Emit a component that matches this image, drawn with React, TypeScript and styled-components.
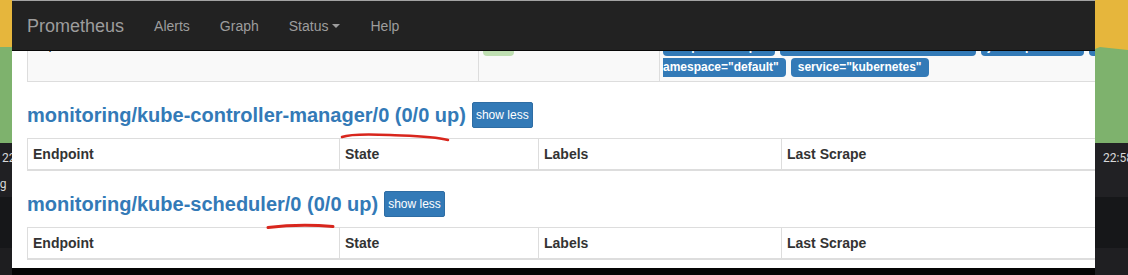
import React from "react";
import styled, { createGlobalStyle } from "styled-components";

const Global = createGlobalStyle`
  html, body { margin: 0; padding: 0; background: #000; }
  body { font-family: "Liberation Sans", Arial, sans-serif; }
  * { box-sizing: border-box; }
`;

const Screen = styled.div`
  position: relative;
  width: 1128px;
  height: 275px;
  overflow: hidden;
  display: flex;
  background: #000;
`;

/* ---------- Grafana background strips ---------- */
const Strip = styled.div<{ $w: number }>`
  width: ${(p) => p.$w}px;
  flex: none;
  display: flex;
  flex-direction: column;
  overflow: hidden;
`;

const Chart = styled.svg`
  display: block;
  flex: none;
`;

const PanelBlock = styled.div<{ $h?: number; $bg: string; $pad?: number }>`
  flex: ${(p) => (p.$h ? `0 0 ${p.$h}px` : "1")};
  background: ${(p) => p.$bg};
  padding-left: ${(p) => p.$pad ?? 0}px;
  display: flex;
  flex-direction: column;
  white-space: nowrap;
`;

const TickText = styled.span<{ $top: number; $shift?: number }>`
  margin-top: ${(p) => p.$top}px;
  margin-left: ${(p) => p.$shift ?? 0}px;
  font-family: Roboto, "Liberation Sans", sans-serif;
  font-size: 12px;
  line-height: 14px;
  color: #d8d9da;
`;

/* ---------- Browser window ---------- */
const WindowColumn = styled.div`
  flex: 1;
  display: flex;
  flex-direction: column;
  min-width: 0;
`;

const BrowserWindow = styled.div`
  flex: 0 0 268px;
  display: grid;
  grid-template-rows: 1px 50px 1fr;
  background: #fff;
  overflow: hidden;
`;

const TopEdge = styled.div`
  background: #a3a3a3;
`;

const Navbar = styled.nav`
  background: #222;
  border-bottom: 1px solid #080808;
  display: flex;
  align-items: center;
`;

const Brand = styled.span`
  padding: 0 15px;
  font-size: 18px;
  line-height: 20px;
  color: #9d9d9d;
`;

const NavLink = styled.span`
  padding: 0 15px;
  font-size: 14px;
  line-height: 20px;
  color: #9d9d9d;
  display: flex;
  align-items: center;
`;

const Caret = styled.span`
  display: inline-block;
  width: 0;
  height: 0;
  margin-left: 4px;
  border-top: 4px solid #9d9d9d;
  border-left: 4px solid transparent;
  border-right: 4px solid transparent;
`;

const Content = styled.div`
  min-height: 0;
  overflow: hidden;
  padding-left: 15px;
  color: #333;
`;

/* bottom of a row of the previous (kubernetes) table, scrolled under the navbar */
const PrevRow = styled.div`
  display: grid;
  grid-template-columns: 450px 181px 1fr;
  grid-template-rows: 30px;
  background: #f9f9f9;
  border-left: 1px solid #ddd;
  border-bottom: 1px solid #ddd;
`;

const Cell = styled.div<{ $divider?: boolean; $padLeft?: number }>`
  display: flex;
  flex-direction: column;
  align-items: flex-start;
  height: 30px;
  padding: 0 5px 4px ${(p) => p.$padLeft ?? 5}px;
  border-left: ${(p) => (p.$divider ? "1px solid #ddd" : "none")};
  font-size: 14px;
  line-height: 20px;
  white-space: nowrap;
  overflow: hidden;
`;

/* the part of a cell that is scrolled away under the navbar */
const Scrolled = styled.div<{ $hidden: number }>`
  flex: none;
  margin-top: -${(p) => p.$hidden}px;
`;

const CellText = styled.div`
  height: 20px;
`;

const LabelLine = styled.div`
  display: flex;
  gap: 5px;
  & + & {
    margin-top: 2px;
  }
`;

const Label = styled.span<{
  $tone?: "primary" | "success";
  $cont?: boolean;
  $cut?: boolean;
}>`
  display: inline-block;
  flex: none;
  height: 19px;
  padding: 3px ${(p) => (p.$cut ? 0 : 7)}px 3px ${(p) => (p.$cont ? 0 : 7)}px;
  font-size: 12px;
  font-weight: bold;
  line-height: 13px;
  color: #fff;
  background: ${(p) => (p.$tone === "success" ? "#bfdfb2" : "#337ab7")};
  border-radius: ${(p) => (p.$cont ? "0 4px 4px 0" : p.$cut ? "4px 0 0 4px" : "4px")};
  white-space: nowrap;
`;

/* target sections */
const Heading = styled.h2`
  display: flex;
  align-items: center;
  gap: 6px;
  margin: 20px 0 10px;
  height: 26px;
`;

const JobLink = styled.a`
  font-size: 20px;
  font-weight: bold;
  line-height: 26px;
  color: #337ab7;
  text-decoration: none;
  white-space: nowrap;
`;

const ToggleButton = styled.button`
  height: 26px;
  padding: 0 3px;
  font-family: "Liberation Sans", Arial, sans-serif;
  font-size: 12px;
  color: #fff;
  background: #337ab7;
  border: 1px solid #2e6da4;
  border-radius: 2px;
`;

const TargetTable = styled.div`
  display: grid;
  grid-template-columns: 311px 199px 243px 1fr;
  border-top: 1px solid #ddd;
  border-left: 1px solid #ddd;
  border-bottom: 2px solid #ddd;
  margin-bottom: 20px;
`;

const HeadCell = styled.div<{ $divider?: boolean }>`
  padding: 5px;
  border-left: ${(p) => (p.$divider ? "1px solid #ddd" : "none")};
  font-size: 14px;
  font-weight: bold;
  line-height: 20px;
  color: #333;
`;

const BottomShade = styled.div`
  flex: 1;
  background: #050505;
`;

const Annotation = styled.svg`
  position: absolute;
  left: 0;
  top: 0;
  pointer-events: none;
`;

const columns = ["Endpoint", "State", "Labels", "Last Scrape"];

function TargetSection({ job }: { job: string }) {
  return (
    <section>
      <Heading>
        <JobLink href="#">{job} (0/0 up)</JobLink>
        <ToggleButton>show less</ToggleButton>
      </Heading>
      <TargetTable>
        {columns.map((c, i) => (
          <HeadCell key={c} $divider={i > 0}>
            {c}
          </HeadCell>
        ))}
      </TargetTable>
    </section>
  );
}

export default function App() {
  return (
    <>
      <Global />
      <Screen>
        <Strip $w={12}>
          <Chart width={12} height={143}>
            <rect x={0} y={0} width={12} height={47} fill="#e6b63c" />
            <rect x={0} y={47} width={12} height={96} fill="#7eb26d" />
          </Chart>
          <PanelBlock $h={54} $bg="#202023" $pad={2}>
            <TickText $top={8}>22:58</TickText>
            <TickText $top={12} $shift={-9}>
              ng
            </TickText>
          </PanelBlock>
          <PanelBlock $h={51} $bg="#161719" />
          <PanelBlock $bg="#1e1e20" />
        </Strip>

        <WindowColumn>
          <BrowserWindow>
            <TopEdge />
            <Navbar>
              <Brand>Prometheus</Brand>
              <NavLink>Alerts</NavLink>
              <NavLink>Graph</NavLink>
              <NavLink>
                Status <Caret />
              </NavLink>
              <NavLink>Help</NavLink>
            </Navbar>
            <Content>
              <PrevRow>
                <Cell>
                  <Scrolled $hidden={17}>
                    <CellText>https://192.168.10.100:6443/metrics</CellText>
                  </Scrolled>
                </Cell>
                <Cell $divider $padLeft={4}>
                  <Scrolled $hidden={16}>
                    <Label $tone="success">UP</Label>
                  </Scrolled>
                </Cell>
                <Cell $divider $padLeft={3}>
                  <Scrolled $hidden={14}>
                    <LabelLine>
                      <Label>endpoint="https"</Label>
                      <Label>instance="192.168.10.100:6443"</Label>
                      <Label>job="apiserver"</Label>
                      <Label $cut>n</Label>
                    </LabelLine>
                    <LabelLine>
                      <Label $cont>amespace="default"</Label>
                      <Label>service="kubernetes"</Label>
                    </LabelLine>
                  </Scrolled>
                </Cell>
              </PrevRow>
              <TargetSection job="monitoring/kube-controller-manager/0" />
              <TargetSection job="monitoring/kube-scheduler/0" />
            </Content>
          </BrowserWindow>
          <BottomShade />
        </WindowColumn>

        <Strip $w={33}>
          <Chart width={33} height={143}>
            <rect x={0} y={0} width={33} height={143} fill="#e6b63c" />
            <polygon points="0,49 5,47 14,48 33,50 33,143 0,143" fill="#7eb26d" />
          </Chart>
          <PanelBlock $h={54} $bg="#212124" $pad={8}>
            <TickText $top={8}>22:58</TickText>
          </PanelBlock>
          <PanelBlock $h={51} $bg="#161719" />
          <PanelBlock $bg="#1f1f22" />
        </Strip>

        <Annotation width={1128} height={275}>
          <path
            d="M342 137 C 350 134, 368 134, 390 135 S 432 136, 448 140"
            fill="none"
            stroke="#d8261d"
            strokeWidth={2.5}
            strokeLinecap="round"
          />
          <path
            d="M268 227.5 Q 300 223.5 333 226.5"
            fill="none"
            stroke="#d8261d"
            strokeWidth={3}
            strokeLinecap="round"
          />
        </Annotation>
      </Screen>
    </>
  );
}
